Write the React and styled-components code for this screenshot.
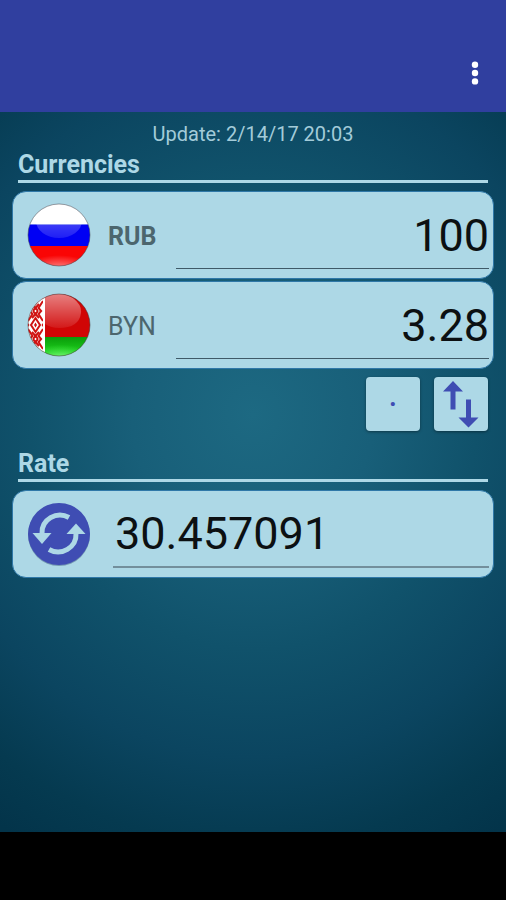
import { useState } from "react";
import styled, { createGlobalStyle } from "styled-components";

const GlobalStyle = createGlobalStyle`
  * {
    box-sizing: border-box;
  }

  body {
    margin: 0;
    background-color: black;
    font-family: Roboto, sans-serif;
  }
`;

const Container = styled.div`
  display: flex;
  flex-direction: column;
  min-height: 100vh;
`;

const Header = styled.header`
  display: flex;
  justify-content: flex-end;
  align-items: flex-end;
  height: 112px;
  padding: 0 11px 19px;
  background-color: #303f9f;
`;

const MenuButton = styled.button`
  display: flex;
  padding: 0;
  border: none;
  background: none;
  color: white;
`;

const Main = styled.main`
  flex: 1;
  padding: 9px 12px;
  background: radial-gradient(
    ellipse 92% 68% at 50% 42%,
    #1d6982 0%,
    #185f79 26%,
    #10526b 48%,
    #0b4560 70%,
    #053a50 88%,
    #03344a 100%
  );
`;

const UpdateText = styled.p`
  margin: 0;
  color: #a3cbd9;
  font-size: 20px;
  line-height: 26px;
  text-align: center;
`;

const SectionTitle = styled.h2`
  margin: 0 6px 8px;
  padding: 4px 0 2px;
  border-bottom: 3px solid #add8e6;
  color: #add8e6;
  font-size: 25px;
  font-weight: bold;
  line-height: 27px;
`;

const CardList = styled.div`
  display: flex;
  flex-direction: column;
  gap: 2px;
`;

const Card = styled.div`
  display: flex;
  align-items: center;
  height: 88px;
  padding: 0 4px 0 14px;
  border: 1px solid #2f78a8;
  border-radius: 14px;
  background-color: #add8e6;
`;

const CurrencyLabel = styled.label`
  width: 68px;
  margin-left: 17px;
  padding-top: 2px;
  color: #4c666e;
  font-size: 25px;
  font-weight: ${(props) => (props.$active ? "bold" : "normal")};
`;

const NumberInput = styled.input`
  flex: 1;
  min-width: 0;
  height: 68px;
  margin-left: ${(props) => (props.$rate ? "22px" : "0")};
  padding: ${(props) => (props.$rate ? "0 0 0 2px" : "2px 0 0")};
  border: none;
  border-bottom: ${(props) =>
    props.$rate ? "2px solid #738f9c" : "1px solid #3f5a68"};
  border-radius: 0;
  outline: none;
  background: none;
  color: #0c1012;
  font-family: inherit;
  font-size: 45px;
  text-align: ${(props) => (props.$rate ? "left" : "right")};
`;

const Actions = styled.div`
  display: flex;
  justify-content: flex-end;
  gap: 14px;
  padding: 8px 6px 15px;
`;

const ActionButton = styled.button`
  display: flex;
  align-items: center;
  justify-content: center;
  width: 54px;
  height: 54px;
  padding: ${(props) => (props.$point ? "0 0 20px" : "0")};
  border: none;
  border-radius: 4px;
  background-color: #add8e6;
  box-shadow: 0 1px 3px rgba(0, 0, 0, 0.4);
  color: #3f4db3;
  font-family: inherit;
  font-size: 36px;
`;

const RefreshButton = styled.button`
  display: flex;
  align-items: center;
  justify-content: center;
  width: 64px;
  height: 64px;
  padding: 0;
  border: none;
  background: none;
`;

const Footer = styled.footer`
  height: 68px;
  background-color: black;
`;

const MoreIcon = () => (
  <svg width="40" height="40" viewBox="0 0 40 40" fill="currentColor">
    <circle cx="20" cy="11.7" r="3.2" />
    <circle cx="20" cy="20" r="3.2" />
    <circle cx="20" cy="28.4" r="3.2" />
  </svg>
);

const RussiaFlag = () => (
  <svg width="64" height="64" viewBox="0 0 64 64">
    <defs>
      <clipPath id="ruClip">
        <circle cx="32" cy="32" r="31" />
      </clipPath>
      <linearGradient id="ruGloss" x1="0" y1="0" x2="0" y2="1">
        <stop offset="0" stopColor="white" stopOpacity="0.4" />
        <stop offset="1" stopColor="white" stopOpacity="0.12" />
      </linearGradient>
      <radialGradient id="ruGlow" cx="0.5" cy="0.8" r="0.6">
        <stop offset="0" stopColor="white" stopOpacity="0.6" />
        <stop offset="1" stopColor="white" stopOpacity="0" />
      </radialGradient>
    </defs>
    <g clipPath="url(#ruClip)">
      <rect width="64" height="21.5" fill="white" />
      <rect y="21.5" width="64" height="21.5" fill="#0000f4" />
      <rect y="43" width="64" height="21" fill="#fa0505" />
      <ellipse cx="32" cy="60" rx="30" ry="13" fill="url(#ruGlow)" />
      <ellipse cx="32" cy="18" rx="23" ry="17" fill="url(#ruGloss)" />
    </g>
    <circle
      cx="32"
      cy="32"
      r="31"
      fill="none"
      stroke="#40404a"
      strokeOpacity="0.5"
    />
  </svg>
);

const BelarusFlag = () => (
  <svg width="64" height="64" viewBox="0 0 64 64">
    <defs>
      <clipPath id="byClip">
        <circle cx="32" cy="32" r="31" />
      </clipPath>
      <linearGradient id="byGloss" x1="0" y1="0" x2="0" y2="1">
        <stop offset="0" stopColor="white" stopOpacity="0.5" />
        <stop offset="1" stopColor="white" stopOpacity="0.08" />
      </linearGradient>
      <radialGradient id="byGlow" cx="0.5" cy="0.8" r="0.6">
        <stop offset="0" stopColor="#c8ffc8" stopOpacity="0.8" />
        <stop offset="1" stopColor="#60ff60" stopOpacity="0" />
      </radialGradient>
      <linearGradient id="byGreen" x1="0" y1="0" x2="0" y2="1">
        <stop offset="0" stopColor="#0a9a0a" />
        <stop offset="1" stopColor="#22e022" />
      </linearGradient>
      <pattern
        id="ornament"
        x="1"
        y="18"
        width="15"
        height="28"
        patternUnits="userSpaceOnUse"
      >
        <rect width="15" height="28" fill="white" />
        <g fill="none" stroke="#d01212" strokeWidth="2">
          <path d="M7.5 7L12 14L7.5 21L3 14Z" />
          <path d="M0 10L4.5 3L1 -1M15 10L10.5 3L14 -1" />
          <path d="M0 18L4.5 25L1 29M15 18L10.5 25L14 29" />
          <path d="M5 0L7.5 3L10 0M5 28L7.5 25L10 28" />
          <path d="M4 7L7.5 3L11 7M4 21L7.5 25L11 21" />
        </g>
        <path d="M7.5 11.5L9 14L7.5 16.5L6 14Z" fill="#d01212" />
        <path d="M0 12L1.5 14L0 16ZM15 12L13.5 14L15 16Z" fill="#d01212" />
      </pattern>
    </defs>
    <g clipPath="url(#byClip)">
      <rect width="64" height="44" fill="#d00505" />
      <rect y="44" width="64" height="20" fill="url(#byGreen)" />
      <ellipse cx="34" cy="60" rx="28" ry="14" fill="url(#byGlow)" />
      <rect width="18" height="64" fill="white" />
      <rect x="1" width="15" height="64" fill="url(#ornament)" />
      <path
        d="M18 3Q32 -3 46 5Q55 12 54 20Q52 35 32 35Q24 35 18 31Z"
        fill="url(#byGloss)"
      />
    </g>
    <circle
      cx="32"
      cy="32"
      r="31"
      fill="none"
      stroke="#403030"
      strokeOpacity="0.5"
    />
  </svg>
);

const SwapIcon = () => (
  <svg width="54" height="54" viewBox="0 0 54 54" fill="currentColor">
    <path d="M19 4L29 14.5H21.5V32.5H16.5V14.5H9Z" />
    <path d="M32 22.5H37V40.5H44.5L34.5 50.5L24.5 40.5H32Z" />
  </svg>
);

const RefreshIcon = () => (
  <svg width="64" height="64" viewBox="0 0 64 64">
    <circle cx="32" cy="33" r="31" fill="#1e3c64" fillOpacity="0.4" />
    <circle cx="32" cy="32" r="31" fill="#3f4db3" />
    <g fill="none" stroke="#add8e6" strokeWidth="5">
      <path d="M42 15.5A18 17.500 0 0 0 15 31.500" />
      <path d="M22 47.500A18 17.500 0 0 0 49 31.500" />
    </g>
    <g fill="#add8e6">
      <path d="M5.500 31H24.500L15 42Z" />
      <path d="M39.500 32H58.500L49 21.500Z" />
    </g>
  </svg>
);

function App() {
  const [amount, setAmount] = useState("100");
  const [result, setResult] = useState("3.28");
  const [rate, setRate] = useState("30.457091");

  const swap = () => {
    setAmount(result);
    setResult(amount);
  };

  return (
    <Container>
      <GlobalStyle />
      <Header>
        <MenuButton aria-label="More options">
          <MoreIcon />
        </MenuButton>
      </Header>
      <Main>
        <UpdateText>Update: 2/14/17 20:03</UpdateText>
        <SectionTitle>Currencies</SectionTitle>
        <CardList>
          <Card>
            <RussiaFlag />
            <CurrencyLabel htmlFor="rub" $active>
              RUB
            </CurrencyLabel>
            <NumberInput
              id="rub"
              inputMode="decimal"
              value={amount}
              onChange={(event) => setAmount(event.target.value)}
            />
          </Card>
          <Card>
            <BelarusFlag />
            <CurrencyLabel htmlFor="byn">BYN</CurrencyLabel>
            <NumberInput
              id="byn"
              inputMode="decimal"
              value={result}
              onChange={(event) => setResult(event.target.value)}
            />
          </Card>
        </CardList>
        <Actions>
          <ActionButton $point onClick={() => setAmount(amount + ".")}>
            .
          </ActionButton>
          <ActionButton aria-label="Swap currencies" onClick={swap}>
            <SwapIcon />
          </ActionButton>
        </Actions>
        <SectionTitle id="rate-title">Rate</SectionTitle>
        <Card>
          <RefreshButton aria-label="Refresh rate">
            <RefreshIcon />
          </RefreshButton>
          <NumberInput
            $rate
            aria-labelledby="rate-title"
            inputMode="decimal"
            value={rate}
            onChange={(event) => setRate(event.target.value)}
          />
        </Card>
      </Main>
      <Footer />
    </Container>
  );
}

export default App;
